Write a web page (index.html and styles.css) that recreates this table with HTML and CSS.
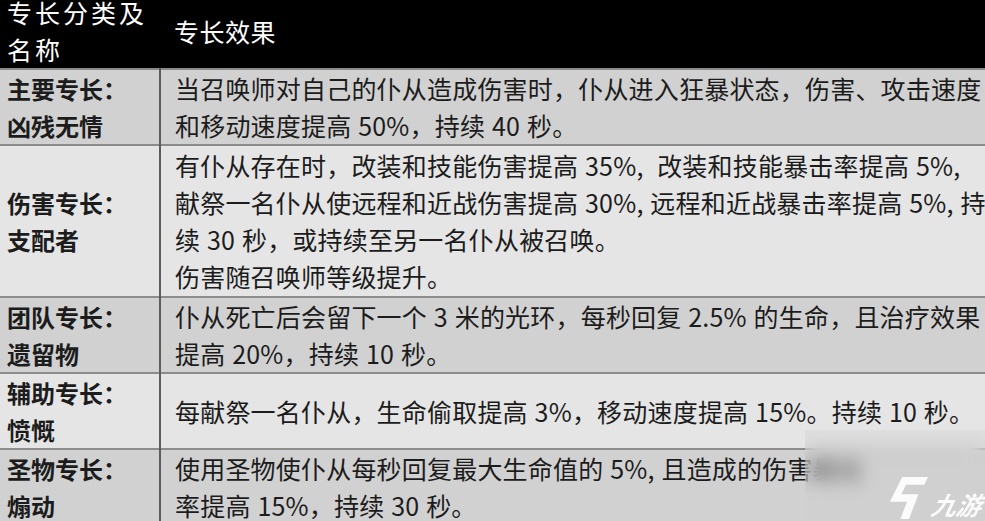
FILE: index.html
```html
<!DOCTYPE html>
<html lang="zh-CN">
<head>
<meta charset="utf-8">
<title>专长</title>
<link rel="stylesheet" href="styles.css">
</head>
<body>
<div class="page">
  <table class="perks">
    <colgroup>
      <col class="c-name">
      <col class="c-effect">
    </colgroup>
    <thead>
      <tr>
        <th class="col-name">专长分类及<br>名称</th>
        <th class="col-effect">专长效果</th>
      </tr>
    </thead>
    <tbody>
      <tr class="dark">
        <td class="col-name">主要专长：<br>凶残无情</td>
        <td class="col-effect">当召唤师对自己的仆从造成伤害时，仆从进入狂暴状态，伤害、攻击速度<br>和移动速度提高 50%，持续 40 秒。</td>
      </tr>
      <tr class="light tall">
        <td class="col-name">伤害专长：<br>支配者</td>
        <td class="col-effect">有仆从存在时，改装和技能伤害提高 35%,&nbsp; 改装和技能暴击率提高 5%,<br>献祭一名仆从使远程和近战伤害提高 30%,&nbsp;远程和近战暴击率提高 5%,&nbsp;持<br>续 30 秒，或持续至另一名仆从被召唤。<br>伤害随召唤师等级提升。</td>
      </tr>
      <tr class="dark">
        <td class="col-name">团队专长：<br>遗留物</td>
        <td class="col-effect">仆从死亡后会留下一个 3 米的光环，每秒回复 2.5% 的生命，且治疗效果<br>提高 20%，持续 10 秒。</td>
      </tr>
      <tr class="light">
        <td class="col-name">辅助专长：<br>愤慨</td>
        <td class="col-effect">每献祭一名仆从，生命偷取提高 3%，移动速度提高 15%。持续 10 秒。</td>
      </tr>
      <tr class="dark">
        <td class="col-name">圣物专长：<br>煽动</td>
        <td class="col-effect">使用圣物使仆从每秒回复最大生命值的 5%,&nbsp;且造成的伤害暴击<br>率提高 15%，持续 30 秒。</td>
      </tr>
    </tbody>
  </table>
  <div class="watermark">
    <svg class="wm-mark" viewBox="0 0 44 46" width="42" height="44" aria-hidden="true">
      <path d="M16 1 L43 1 L39 9 L20 9 L15 19 L33 19 L23 45 L14 45 L21 27 L3 27 Z" fill="#fff" fill-opacity="0.9"/>
    </svg>
    <span class="wm-text">九游</span>
  </div>
</div>
</body>
</html>
```

FILE: styles.css
```css
html, body {
  margin: 0;
  padding: 0;
  background: #d2d2d2;
}

.page {
  position: relative;
  width: 985px;
  height: 521px;
  overflow: hidden;
}

.perks {
  border-collapse: collapse;
  table-layout: fixed;
  width: 1010px;
  margin-top: -6px;
  font-family: "Noto Sans CJK SC", "Noto Sans", sans-serif;
  color: #1c1c1c;
}

.c-name {
  width: 160px;
}

.perks th {
  background: #000;
  color: #fff;
  font-weight: 400;
  font-size: 25px;
  line-height: 37px;
  text-align: left;
  vertical-align: middle;
  padding: 0;
  white-space: nowrap;
}

.perks th.col-name {
  padding-left: 7px;
  letter-spacing: 3px;
}

.perks th.col-effect {
  padding-left: 14px;
  letter-spacing: 0.5px;
}

.perks td {
  font-size: 25px;
  line-height: 37px;
  padding: 0;
  vertical-align: middle;
  white-space: nowrap;
  border-top: 2px solid #8c8c8c;
  letter-spacing: 0.2px;
  word-spacing: 1px;
}

.perks tr.tall td {
  padding-top: 1px;
  padding-bottom: 1px;
}

.perks td.col-name {
  padding-left: 7px;
  font-weight: 700;
  font-size: 24px;
  letter-spacing: 0;
  border-right: 2px solid #5c5c5c;
}

.perks td.col-effect {
  padding-left: 14px;
}

.perks tr.dark td {
  background: #d1d1d1;
}

.perks tr.light td {
  background: #e5e5e5;
}

.watermark {
  position: absolute;
  left: 805px;
  top: 430px;
  right: 0;
  bottom: 0;
  backdrop-filter: blur(9px);
  background: rgba(205, 205, 205, 0.3);
  display: flex;
  align-items: flex-end;
  justify-content: flex-end;
  gap: 3px;
  padding: 0 3px 1px 0;
}

.wm-mark {
  display: block;
}

.wm-text {
  font-family: "Noto Sans CJK SC", sans-serif;
  font-weight: 700;
  font-style: italic;
  font-size: 25px;
  line-height: 32px;
  color: rgba(255, 255, 255, 0.9);
  transform: skewX(-12deg);
}
```
